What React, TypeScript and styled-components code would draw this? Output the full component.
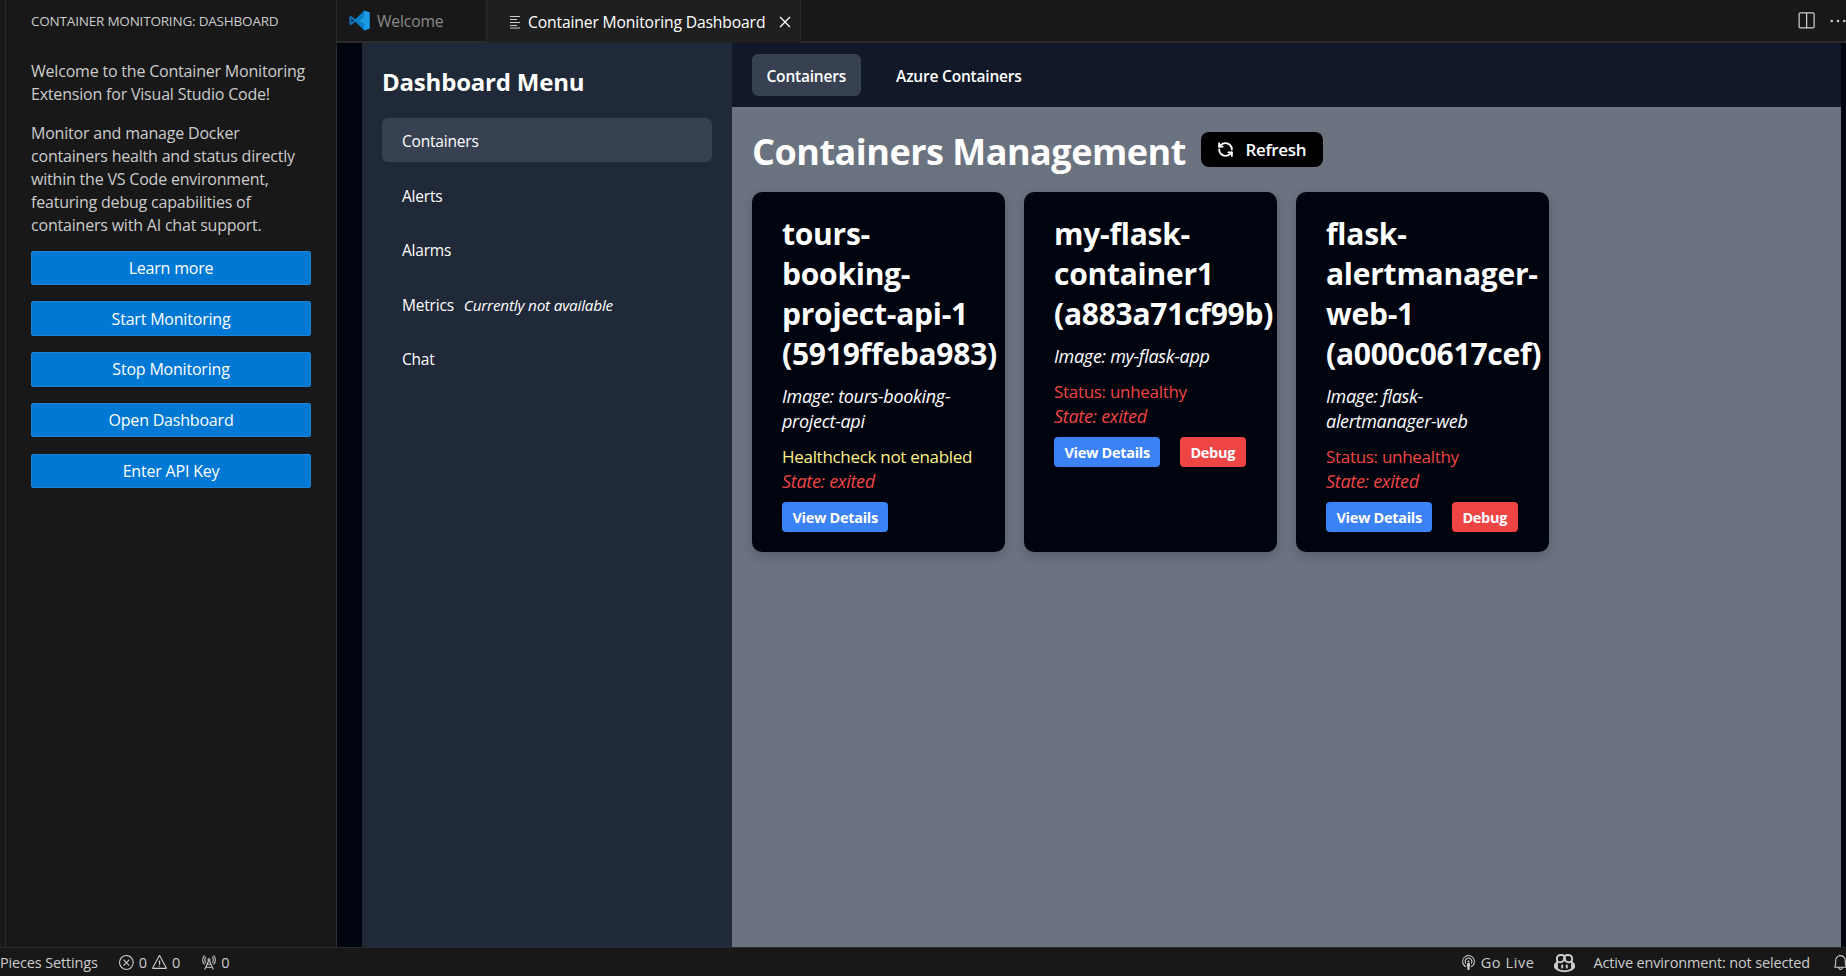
import styled, { createGlobalStyle } from 'styled-components';
import { VscBell, VscBroadcast, VscClose, VscCopilot, VscEllipsis, VscError, VscRadioTower, VscSplitHorizontal, VscWarning } from 'react-icons/vsc';
import { LuRefreshCcw } from 'react-icons/lu';

const GlobalStyle = createGlobalStyle`
  html, body {
    margin: 0;
    padding: 0;
    height: 100%;
    background: #181818;
    overflow: hidden;
  }
  #root {
    height: 100%;
  }
  * {
    box-sizing: border-box;
  }
`;

const Window = styled.div`
  width: 1846px;
  height: 976px;
  display: flex;
  flex-direction: column;
  font-family: 'Open Sans', 'Noto Sans', sans-serif;
  color: #ccc;
  overflow: hidden;
`;

const Workbench = styled.div`
  flex: 1;
  min-height: 0;
  display: flex;
`;

const ActivityEdge = styled.div`
  width: 6px;
  border-right: 1px solid #2b2b2b;
  background: #181818;
`;

const SidePanel = styled.aside`
  width: 331px;
  background: #181818;
  border-right: 1px solid #2b2b2b;
  display: flex;
  flex-direction: column;
  padding: 0 25px;
`;

const SideTitle = styled.div`
  height: 42px;
  display: flex;
  align-items: center;
  font-size: 13.5px;
  letter-spacing: -0.2px;
  white-space: nowrap;
`;

const SideText = styled.p`
  margin: 0 0 15.5px;
  font-size: 16px;
  line-height: 23px;
  letter-spacing: -0.2px;
  &:first-of-type {
    margin-top: 18px;
  }
`;

const SideButtons = styled.div`
  display: flex;
  flex-direction: column;
  gap: 16.25px;
  margin-top: -1.5px;
`;

const SideButton = styled.button`
  height: 34.5px;
  width: 100%;
  background: #0078d4;
  border: 1px solid #1c84d6;
  border-radius: 2px;
  color: #fff;
  font-family: inherit;
  font-size: 16px;
  letter-spacing: -0.2px;
  padding: 0;
`;

const Editor = styled.main`
  flex: 1;
  min-width: 0;
  display: flex;
  flex-direction: column;
`;

const TabBar = styled.div`
  height: 43px;
  display: flex;
  background: #181818;
  border-bottom: 2px solid #2b2b2b;
`;

const Tab = styled.div<{ $active?: boolean }>`
  height: ${(p) => (p.$active ? '43px' : '41px')};
  width: ${(p) => (p.$active ? '314px' : '150px')};
  display: flex;
  align-items: center;
  gap: ${(p) => (p.$active ? '7px' : '6px')};
  padding-left: ${(p) => (p.$active ? '22px' : '11px')};
  background: ${(p) => (p.$active ? '#1f1f1f' : '#181818')};
  border-right: 1px solid #2b2b2b;
  color: ${(p) => (p.$active ? '#fff' : '#8a8a8a')};
  font-size: 15.7px;
  letter-spacing: -0.15px;
  white-space: nowrap;
  flex-shrink: 0;
`;

const TabClose = styled(VscClose)`
  font-size: 20px;
  margin-left: 3px;
  color: #fff;
`;

const TabActions = styled.div`
  margin-left: auto;
  margin-right: -2px;
  display: flex;
  align-items: center;
  gap: 12px;
  color: #ccc;
  font-size: 20px;
`;

const Webview = styled.div`
  flex: 1;
  min-height: 0;
  display: flex;
  background: #00040f;
  padding: 0 5px 0 25px;
`;

const Menu = styled.nav`
  width: 370px;
  background: #1f2937;
  padding: 20px 20px;
  display: flex;
  flex-direction: column;
`;

const MenuTitle = styled.h2`
  margin: 0 0 17px;
  color: #fff;
  font-size: 24px;
  line-height: 38px;
  font-weight: 700;
  letter-spacing: -0.2px;
`;

const MenuList = styled.div`
  display: flex;
  flex-direction: column;
  gap: 10.5px;
`;

const MenuItem = styled.div<{ $active?: boolean }>`
  height: 44px;
  display: flex;
  align-items: center;
  gap: 10px;
  padding: 2px 0 0 20px;
  border-radius: 6px;
  background: ${(p) => (p.$active ? '#374151' : 'transparent')};
  color: #fff;
  font-size: 15.5px;
  letter-spacing: -0.2px;
`;

const MenuNote = styled.em`
  font-size: 15.3px;
  letter-spacing: -0.2px;
`;

const Content = styled.section`
  flex: 1;
  min-width: 0;
  display: flex;
  flex-direction: column;
`;

const TopTabs = styled.div`
  height: 64px;
  background: #111827;
  display: flex;
  align-items: flex-start;
  gap: 21px;
  padding: 11px 20px 0;
`;

const TopTab = styled.div<{ $active?: boolean }>`
  height: 42px;
  padding: 2px 14.5px 0;
  display: flex;
  align-items: center;
  border-radius: 6px;
  background: ${(p) => (p.$active ? '#374151' : 'transparent')};
  color: #fff;
  font-size: 15.5px;
  font-weight: 600;
  letter-spacing: -0.2px;
`;

const Pane = styled.div`
  flex: 1;
  min-height: 0;
  background: #6b7280;
  padding: 25px 20px;
`;

const HeadingRow = styled.div`
  display: flex;
  align-items: flex-start;
  gap: 15px;
  margin-bottom: 16px;
`;

const Heading = styled.h1`
  margin: 0;
  height: 44px;
  color: #fff;
  font-size: 36px;
  line-height: 40px;
  font-weight: 700;
  letter-spacing: -0.5px;
  white-space: nowrap;
`;

const RefreshButton = styled.button`
  width: 122px;
  height: 35px;
  background: #000;
  border: none;
  border-radius: 8px;
  color: #fff;
  display: flex;
  align-items: center;
  justify-content: center;
  gap: 11px;
  font-family: inherit;
  font-size: 17px;
  font-weight: 600;
  letter-spacing: -0.3px;
  padding: 0;
`;

const CardRow = styled.div`
  display: flex;
  align-items: stretch;
  gap: 19.5px;
`;

const Card = styled.article`
  width: 252.5px;
  background: #00040f;
  border-radius: 10px;
  box-shadow: 0 4px 12px rgba(0, 0, 0, 0.18);
  padding: 22px 30px 20px;
`;

const CardTitle = styled.h3`
  margin: 0 0 10px;
  color: #fff;
  font-size: 30px;
  line-height: 40px;
  font-weight: 700;
  letter-spacing: -0.25px;
  white-space: pre-line;
`;

const CardImage = styled.p`
  margin: 0 0 10px;
  color: #fff;
  font-size: 18px;
  line-height: 25px;
  font-style: italic;
  letter-spacing: -0.3px;
`;

const Health = styled.p<{ $tone: 'warn' | 'bad' }>`
  margin: 0;
  color: ${(p) => (p.$tone === 'warn' ? '#fef08a' : '#ef4444')};
  font-size: 17px;
  line-height: 25px;
  letter-spacing: -0.3px;
`;

const CardState = styled(Health).attrs({ $tone: 'bad' as const })`
  font-size: 18px;
  font-style: italic;
`;

const CardActions = styled.div`
  display: flex;
  gap: 19.5px;
  margin-top: 8px;
`;

const CardButton = styled.button<{ $danger?: boolean }>`
  height: 30px;
  padding: 0 10.5px;
  border: none;
  border-radius: 4px;
  background: ${(p) => (p.$danger ? '#ef4444' : '#3b82f6')};
  color: #fff;
  font-family: inherit;
  font-size: 14.5px;
  font-weight: 700;
  letter-spacing: -0.3px;
`;

const StatusBar = styled.footer`
  height: 29px;
  background: #181818;
  border-top: 1px solid #2b2b2b;
  display: flex;
  align-items: center;
  white-space: nowrap;
  color: #ccc;
`;

const StatusGroup = styled.div<{ $gap?: number; $left?: number }>`
  display: flex;
  align-items: center;
  gap: ${(p) => p.$gap ?? 4}px;
  margin-left: ${(p) => p.$left ?? 0}px;
  font-size: 14.5px;
  letter-spacing: -0.15px;
  svg {
    font-size: 17px;
    flex-shrink: 0;
  }
`;

const GoLive = styled(StatusGroup)`
  letter-spacing: 0.6px;
`;

const CopilotMark = styled(VscCopilot)`
  font-size: 21px !important;
`;

const BellWrap = styled(StatusGroup)`
  margin-right: -3px;
`;

const Spacer = styled.div`
  flex: 1;
`;

const VsCodeLogo = () => (
  <svg width="23" height="23" viewBox="0 0 24 24">
    <path fill="#0a7cc8" d="M17 1.500 7.600 10.600 3.300 7.300 1.500 8.200v7.600l1.800.9 4.300-3.300 9.400 9.100 5.500-2.200V3.700zM3.500 14.400V9.600L6 12zm13.500 1.900L11.400 12 17 7.700z" />
    <path fill="#1b9be6" d="M17 1.500 22.500 3.700V20.300L17 22.500V16.300L11.400 12 17 7.700z" />
  </svg>
);

const PreviewLines = () => (
  <svg width="12" height="14" viewBox="0 0 12 14" fill="none" stroke="#ccc" strokeWidth="1">
    <path d="M1 1.500h10M1 4.500h7M1 7.500h10M1 10.500h7M1 13h10" />
  </svg>
);

const containers = [
  {
    name: 'tours-\nbooking-\nproject-api-1\n(5919ffeba983)',
    image: 'Image: tours-booking-project-api',
    health: 'Healthcheck not enabled',
    tone: 'warn' as const,
    debug: false,
  },
  {
    name: 'my-flask-\ncontainer1\n(a883a71cf99b)',
    image: 'Image: my-flask-app',
    health: 'Status: unhealthy',
    tone: 'bad' as const,
    debug: true,
  },
  {
    name: 'flask-\nalertmanager-\nweb-1\n(a000c0617cef)',
    image: 'Image: flask-alertmanager-web',
    health: 'Status: unhealthy',
    tone: 'bad' as const,
    debug: true,
  },
];

const sideActions = ['Learn more', 'Start Monitoring', 'Stop Monitoring', 'Open Dashboard', 'Enter API Key'];

export default function App() {
  return (
    <Window>
      <GlobalStyle />
      <Workbench>
        <ActivityEdge />
        <SidePanel>
          <SideTitle>CONTAINER MONITORING: DASHBOARD</SideTitle>
          <SideText>Welcome to the Container Monitoring Extension for Visual Studio Code!</SideText>
          <SideText>Monitor and manage Docker containers health and status directly within the VS Code environment, featuring debug capabilities of containers with AI chat support.</SideText>
          <SideButtons>
            {sideActions.map((label) => (
              <SideButton key={label}>{label}</SideButton>
            ))}
          </SideButtons>
        </SidePanel>
        <Editor>
          <TabBar>
            <Tab>
              <VsCodeLogo />
              Welcome
            </Tab>
            <Tab $active>
              <PreviewLines />
              Container Monitoring Dashboard
              <TabClose />
            </Tab>
            <TabActions>
              <VscSplitHorizontal />
              <VscEllipsis />
            </TabActions>
          </TabBar>
          <Webview>
            <Menu>
              <MenuTitle>Dashboard Menu</MenuTitle>
              <MenuList>
                <MenuItem $active>Containers</MenuItem>
                <MenuItem>Alerts</MenuItem>
                <MenuItem>Alarms</MenuItem>
                <MenuItem>
                  Metrics
                  <MenuNote>Currently not available</MenuNote>
                </MenuItem>
                <MenuItem>Chat</MenuItem>
              </MenuList>
            </Menu>
            <Content>
              <TopTabs>
                <TopTab $active>Containers</TopTab>
                <TopTab>Azure Containers</TopTab>
              </TopTabs>
              <Pane>
                <HeadingRow>
                  <Heading>Containers Management</Heading>
                  <RefreshButton>
                    <LuRefreshCcw size={17} strokeWidth={2.6} />
                    Refresh
                  </RefreshButton>
                </HeadingRow>
                <CardRow>
                  {containers.map((c) => (
                    <Card key={c.name}>
                      <CardTitle>{c.name}</CardTitle>
                      <CardImage>{c.image}</CardImage>
                      <Health $tone={c.tone}>{c.health}</Health>
                      <CardState>State: exited</CardState>
                      <CardActions>
                        <CardButton>View Details</CardButton>
                        {c.debug && <CardButton $danger>Debug</CardButton>}
                      </CardActions>
                    </Card>
                  ))}
                </CardRow>
              </Pane>
            </Content>
          </Webview>
        </Editor>
      </Workbench>
      <StatusBar>
        <StatusGroup>Pieces Settings</StatusGroup>
        <StatusGroup $left={20}>
          <VscError />0
          <VscWarning />0
        </StatusGroup>
        <StatusGroup $left={20}>
          <VscRadioTower />0
        </StatusGroup>
        <Spacer />
        <GoLive>
          <VscBroadcast />
          Go Live
        </GoLive>
        <StatusGroup $left={20}>
          <CopilotMark />
        </StatusGroup>
        <StatusGroup $left={18}>Active environment: not selected</StatusGroup>
        <BellWrap $left={22}>
          <VscBell />
        </BellWrap>
      </StatusBar>
    </Window>
  );
}
